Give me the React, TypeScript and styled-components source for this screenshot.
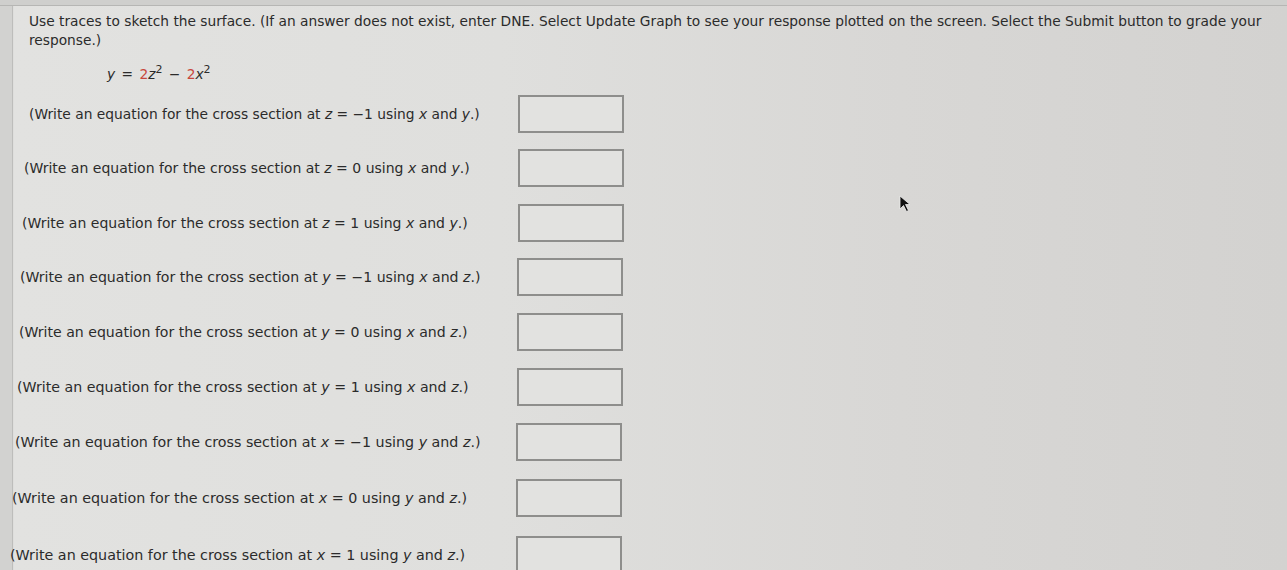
import React from "react";
import styled, { createGlobalStyle } from "styled-components";

const Global = createGlobalStyle`
  html, body { margin: 0; padding: 0; }
  body {
    width: 1287px; height: 570px; overflow: hidden;
    background: #d6d5d3;
    font-family: "DejaVu Sans", Verdana, sans-serif;
  }
`;

const Screen = styled.div`
  width: 1287px;
  height: 570px;
  display: flex;
  flex-direction: column;
  background: linear-gradient(90deg, #d2d2d0 0px, #d2d2d0 12px, #e2e2e0 14px, #dfdfdd 500px, #d8d7d5 900px, #d3d2d0 1287px);
  overflow: hidden;
  position: relative;
`;

const TopBand = styled.div`
  height: 5px;
  flex: none;
  background: #cfcfcd;
  border-bottom: 1px solid #b6b6b4;
`;

const Body = styled.div`
  display: flex;
  flex: 1;
`;

const Rail = styled.div`
  width: 12px;
  flex: none;
  border-right: 1.5px solid #bdbdbb;
`;

const Content = styled.div`
  flex: 1;
  display: flex;
  flex-direction: column;
  color: #2b2b2b;
  font-size: 13.75px;
`;

const Intro = styled.p`
  margin: 6px 0 0 16px;
  line-height: 19px;
  width: 1250px;
`;

const Equation = styled.div`
  margin: 14px 0 0 94px;
  height: 20px;
  line-height: 20px;
  word-spacing: 2px;
`;

const Red = styled.span`
  color: #c8473c;
`;

const I = styled.i`
  font-style: italic;
`;

const Sup = styled.sup`
  font-size: 11px;
  vertical-align: 6px;
  line-height: 0;
`;

const Rows = styled.div`
  display: flex;
  flex-direction: column;
  margin-top: 2px;
`;

const Row = styled.div<{ $h: number }>`
  display: flex;
  align-items: center;
  height: ${(p) => p.$h}px;
  flex: none;
`;

const Label = styled.div<{ $indent: number; $shift: number; $size: number }>`
  width: ${(p) => 505 - p.$shift - p.$indent}px;
  margin-left: ${(p) => p.$indent}px;
  font-size: ${(p) => p.$size}px;
  white-space: nowrap;
`;

const AnswerBox = styled.div`
  width: 102px;
  height: 34px;
  border: 2px solid #8e8e8c;
  background: #e2e2e0;
  flex: none;
`;

const Pointer = styled.svg`
  position: absolute;
  left: 898px;
  top: 194px;
`;

type R = { v: string; val: string; a: string; b: string; h: number; indent: number; shift: number; size: number };

const rows: R[] = [
  { v: "z", val: "\u22121", a: "x", b: "y", h: 55, indent: 16, shift: 0, size: 13.8 },
  { v: "z", val: "0", a: "x", b: "y", h: 54, indent: 11, shift: 0, size: 14.0 },
  { v: "z", val: "1", a: "x", b: "y", h: 55, indent: 9, shift: 0, size: 14.0 },
  { v: "y", val: "\u22121", a: "x", b: "z", h: 54, indent: 7, shift: 1, size: 14.1 },
  { v: "y", val: "0", a: "x", b: "z", h: 55, indent: 6, shift: 1, size: 14.1 },
  { v: "y", val: "1", a: "x", b: "z", h: 55, indent: 4, shift: 1, size: 14.2 },
  { v: "x", val: "\u22121", a: "y", b: "z", h: 56, indent: 2, shift: 2, size: 14.25 },
  { v: "x", val: "0", a: "y", b: "z", h: 56, indent: -1, shift: 2, size: 14.3 },
  { v: "x", val: "1", a: "y", b: "z", h: 57, indent: -3, shift: 2, size: 14.3 },
];

export default function App() {
  return (
    <>
      <Global />
      <Screen>
        <TopBand />
        <Body>
          <Rail />
          <Content>
            <Intro>
              Use traces to sketch the surface. (If an answer does not exist, enter DNE. Select Update Graph to see your
              response plotted on the screen. Select the Submit button to grade your response.)
            </Intro>
            <Equation>
              <I>y</I> = <Red>2</Red>
              <I>z</I>
              <Sup>2</Sup> &minus; <Red>2</Red>
              <I>x</I>
              <Sup>2</Sup>
            </Equation>
            <Rows>
              {rows.map((r, i) => (
                <Row key={i} $h={r.h}>
                  <Label $indent={r.indent} $shift={r.shift} $size={r.size}>
                    (Write an equation for the cross section at <I>{r.v}</I> = {r.val} using <I>{r.a}</I> and{" "}
                    <I>{r.b}</I>.)
                  </Label>
                  <AnswerBox />
                </Row>
              ))}
            </Rows>
          </Content>
        </Body>
        <Pointer width="16" height="20" viewBox="0 0 16 20">
          <path d="M2 2 L2 15 L5.5 11.5 L8.5 17.5 L10.5 16.5 L7.5 10.5 L12 10.5 Z" fill="#111" stroke="#eee" strokeWidth="0.8" />
        </Pointer>
      </Screen>
    </>
  );
}
